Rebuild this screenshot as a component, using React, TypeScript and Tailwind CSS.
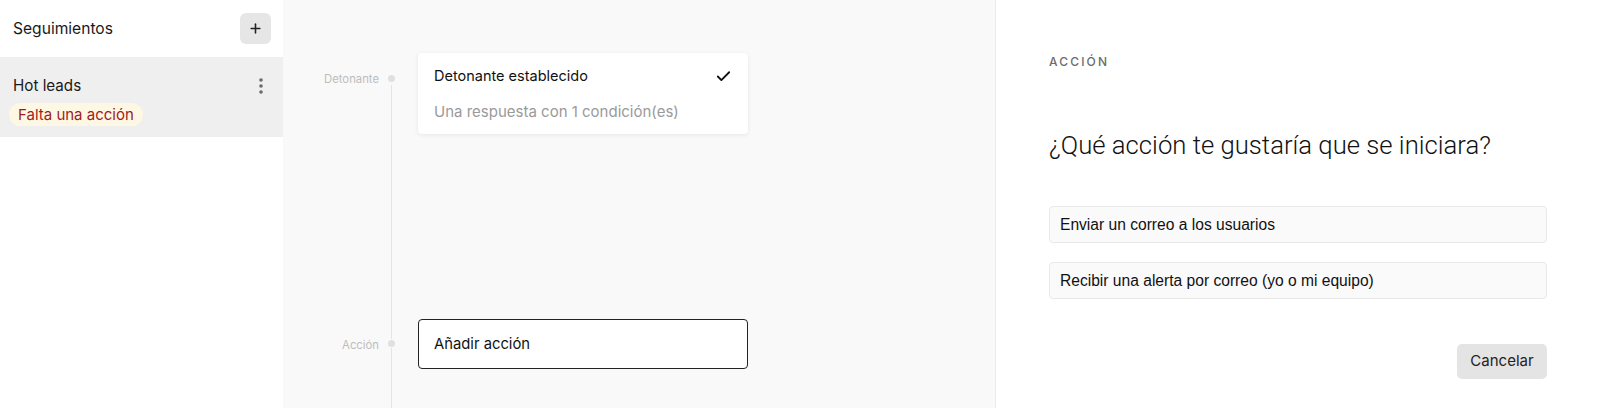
import { Check, Plus } from 'lucide-react';

const sans = "font-['Inter','Noto_Sans',sans-serif]";

export default function App() {
  return (
    <div className={`flex h-[408px] w-[1600px] overflow-hidden bg-white text-[#111] ${sans}`}>
      {/* Sidebar */}
      <aside className="flex w-[283px] shrink-0 flex-col bg-white">
        <div className="flex h-[57px] items-center justify-between pl-[13px] pr-[12px]">
          <span className="text-[15.6px] text-[#1a1a1a]">Seguimientos</span>
          <button className="flex h-[31px] w-[31px] items-center justify-center rounded-[6px] bg-[#e6e6e6] text-[#222]">
            <Plus size={15} strokeWidth={2.5} />
          </button>
        </div>
        <div className="flex h-[80px] items-start justify-between bg-[#efefef] pl-[13px] pr-[19px] pt-[19px]">
          <div className="flex flex-col items-start">
            <span className="text-[15.2px] leading-[20px] text-[#1a1a1a]">Hot leads</span>
            <span className="-ml-[4px] mt-[7px] rounded-full bg-[#fef7e4] px-[9px] text-[15px] leading-[23px] text-[#9f1c1c]">
              Falta una acción
            </span>
          </div>
          <svg width="6" height="18" viewBox="0 0 6 18" className="mt-[1px] text-[#6b6b6b]">
            <circle cx="3" cy="3" r="1.8" fill="currentColor" />
            <circle cx="3" cy="9" r="1.8" fill="currentColor" />
            <circle cx="3" cy="15" r="1.8" fill="currentColor" />
          </svg>
        </div>
      </aside>

      {/* Timeline */}
      <main className="flex w-[712px] shrink-0 flex-col bg-[#f9f9f9] pt-[53px]">
        <div className="flex h-[266px]">
          <div className="w-[96px] shrink-0 pt-[18px] text-right text-[11.3px] leading-[16px] text-[#bdbdbd]">
            Detonante
          </div>
          <div className="flex w-[24px] shrink-0 flex-col items-center pt-[22px]">
            <div className="h-[7px] w-[7px] rounded-full bg-[#e0e0e0]" />
            <div className="mt-[3px] w-px flex-1 bg-[#e4e4e4]" />
          </div>
          <div className="ml-[15px] h-[81px] w-[330px] rounded-[4px] bg-white px-4 pb-[14px] pt-[13px] shadow-[0_1px_4px_rgba(0,0,0,0.08)]">
            <div className="flex items-center justify-between text-[14.5px] leading-[20px] text-[#111]">
              <span>Detonante establecido</span>
              <Check size={17} strokeWidth={2.6} className="text-[#111]" />
            </div>
            <div className="mt-[16px] text-[15px] leading-[20px] text-[#9a9a9a]">
              Una respuesta con 1 condición(es)
            </div>
          </div>
        </div>
        <div className="flex flex-1">
          <div className="w-[96px] shrink-0 pt-[18px] text-right text-[11.3px] leading-[16px] text-[#bdbdbd]">
            Acción
          </div>
          <div className="flex w-[24px] shrink-0 flex-col items-center">
            <div className="h-[20px] w-px bg-[#e4e4e4]" />
            <div className="my-[1px] h-[7px] w-[7px] shrink-0 rounded-full bg-[#e0e0e0]" />
            <div className="w-px flex-1 bg-[#e4e4e4]" />
          </div>
          <div className="ml-[15px] flex h-[50px] w-[330px] items-center rounded-[4px] border border-[#222] bg-white px-[15px] text-[14.8px] text-[#111]">
            Añadir acción
          </div>
        </div>
      </main>

      {/* Action panel */}
      <section className="flex flex-1 flex-col border-l border-[#ececec] bg-white px-[53px] pt-[54px]">
        <div className="text-[12px] font-medium leading-[16px] tracking-[0.18em] text-[#6b6b6b]">ACCIÓN</div>
        <h2 className="mt-[59px] font-['Roboto',sans-serif] text-[25.7px] font-light leading-[32px] text-[#111]">
          ¿Qué acción te gustaría que se iniciara?
        </h2>
        <div className="mt-[45px] flex flex-col gap-[19px]">
          {['Enviar un correo a los usuarios', 'Recibir una alerta por correo (yo o mi equipo)'].map((label) => (
            <button
              key={label}
              className="flex h-[37px] items-center rounded-[4px] border border-[#e9e9e9] bg-[#fafafa] px-[10px] text-left font-['Liberation_Sans',sans-serif] text-[15.6px] text-[#111]"
            >
              {label}
            </button>
          ))}
        </div>
        <div className="mt-[45px] flex justify-end">
          <button className="h-[35px] w-[90px] rounded-[5px] bg-[#e4e4e4] text-[15px] text-[#222]">Cancelar</button>
        </div>
      </section>
    </div>
  );
}
